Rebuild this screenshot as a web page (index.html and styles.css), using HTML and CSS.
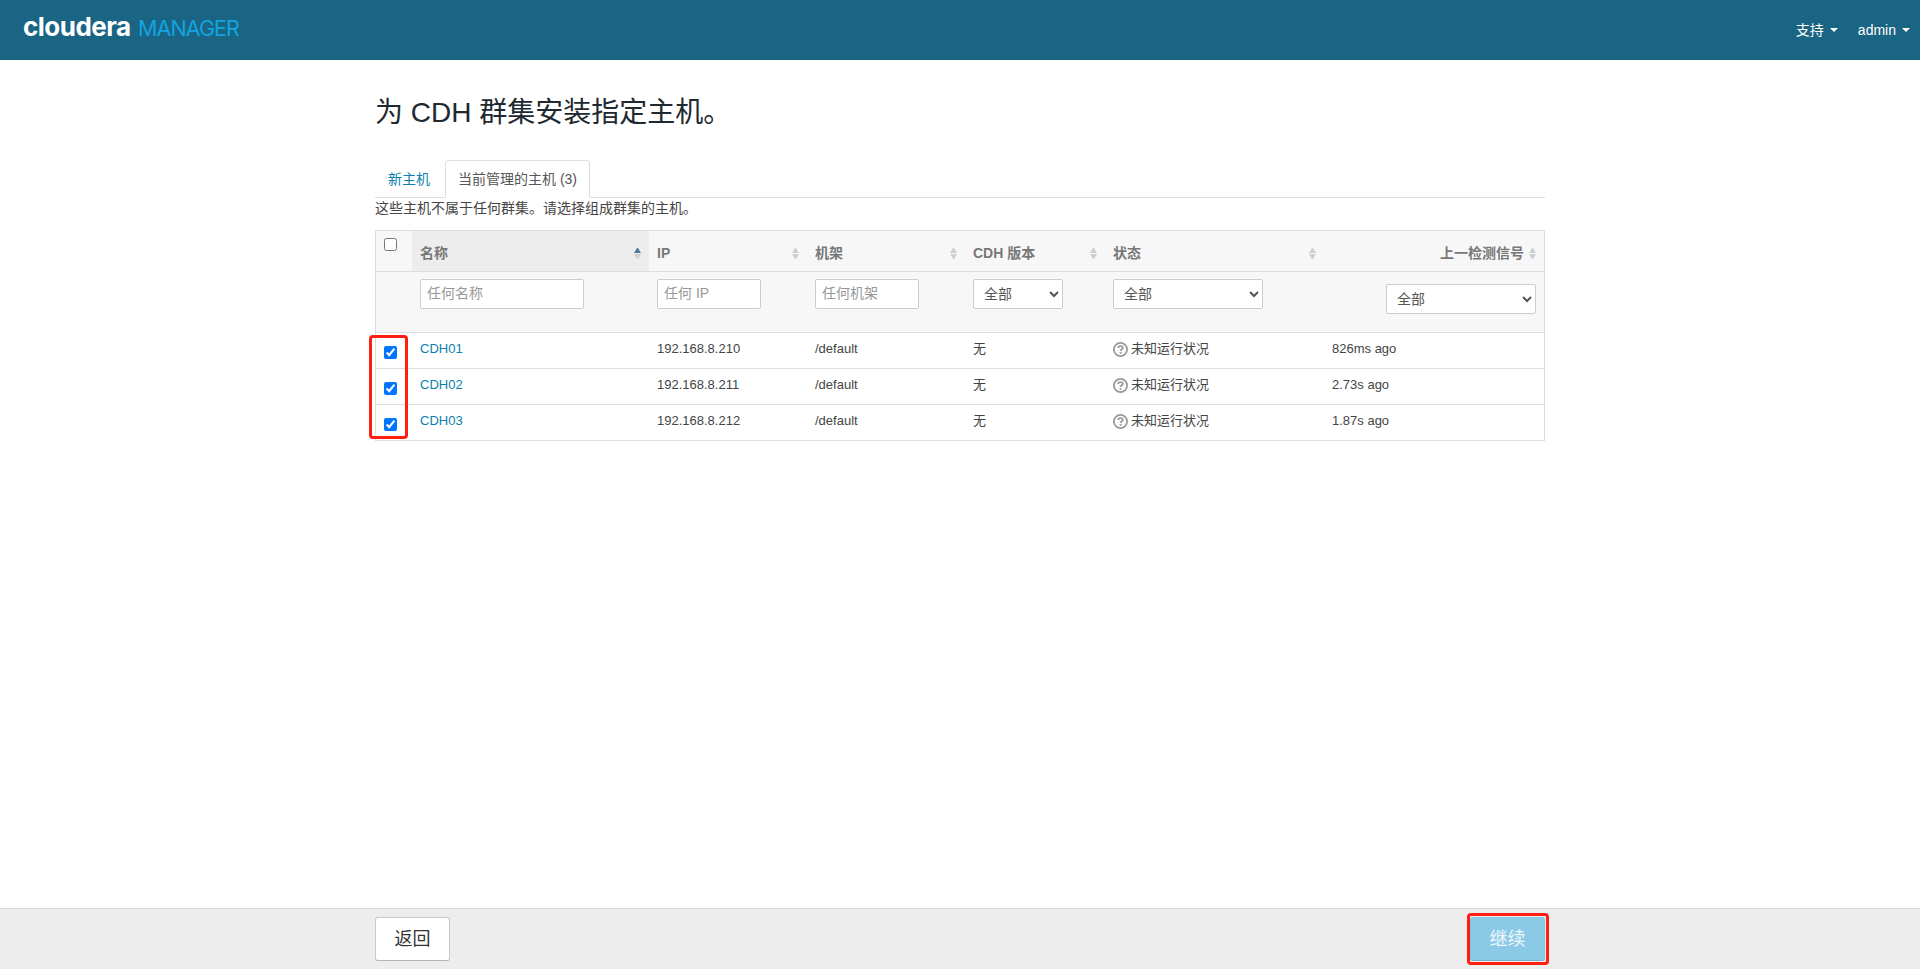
FILE: index.html
```html
<!DOCTYPE html>
<html lang="zh-CN">
<head>
  <meta charset="UTF-8" />
  <meta name="viewport" content="width=device-width, initial-scale=1.0"/>
  <title>Cloudera Manager</title>
  <link rel="stylesheet" href="styles.css">
</head>
<body>

  <!-- TOP BAR -->
  <header class="navbar">
    <div class="brand"><span class="brand-name">cloudera</span><span class="brand-product">MANAGER</span></div>
    <nav class="menu">
      <a class="menu-item">支持<span class="caret"></span></a>
      <a class="menu-item">admin<span class="caret"></span></a>
    </nav>
  </header>

  <!-- CONTENT -->
  <main class="container content">
    <h1>为 CDH 群集安装指定主机。</h1>
    <div class="tabs">
      <a class="tab">新主机</a>
      <a class="tab active">当前管理的主机 (3)</a>
    </div>
    <p class="hint">这些主机不属于任何群集。请选择组成群集的主机。</p>

    <div class="table-wrap">
      <table class="hosts">
        <colgroup>
          <col class="col-check"><col class="col-name"><col class="col-ip"><col class="col-rack"><col class="col-version"><col class="col-status"><col>
        </colgroup>
        <thead>
          <tr class="head">
            <th class="check"><input type="checkbox"></th>
            <th class="sorted"><div class="th">名称<span class="sort"></span></div></th>
            <th><div class="th">IP<span class="sort"></span></div></th>
            <th><div class="th">机架<span class="sort"></span></div></th>
            <th><div class="th">CDH 版本<span class="sort"></span></div></th>
            <th><div class="th">状态<span class="sort"></span></div></th>
            <th><div class="th right">上一检测信号<span class="sort"></span></div></th>
          </tr>
          <tr class="filters">
            <td></td>
            <td><input class="field name" type="text" placeholder="任何名称"></td>
            <td><input class="field" type="text" placeholder="任何 IP"></td>
            <td><input class="field" type="text" placeholder="任何机架"></td>
            <td><select class="field small"><option>全部</option></select></td>
            <td><select class="field wide"><option>全部</option></select></td>
            <td class="last"><select class="field wide"><option>全部</option></select></td>
          </tr>
        </thead>
        <tbody>
          <tr>
            <td class="check"><input type="checkbox" checked></td>
            <td><a>CDH01</a></td><td>192.168.8.210</td><td>/default</td><td>无</td>
            <td><div class="status"><svg class="unknown" viewBox="0 0 15 15"><circle cx="7.5" cy="7.5" r="6.6"/><path d="M5.2 6C5.2 3.4 9.8 3.4 9.8 5.9C9.8 7.4 7.5 7.2 7.5 9M7.5 10V11.7"/></svg>未知运行状况</div></td>
            <td class="ago">826ms ago</td>
          </tr>
          <tr>
            <td class="check"><input type="checkbox" checked></td>
            <td><a>CDH02</a></td><td>192.168.8.211</td><td>/default</td><td>无</td>
            <td><div class="status"><svg class="unknown" viewBox="0 0 15 15"><circle cx="7.5" cy="7.5" r="6.6"/><path d="M5.2 6C5.2 3.4 9.8 3.4 9.8 5.9C9.8 7.4 7.5 7.2 7.5 9M7.5 10V11.7"/></svg>未知运行状况</div></td>
            <td class="ago">2.73s ago</td>
          </tr>
          <tr>
            <td class="check"><input type="checkbox" checked></td>
            <td><a>CDH03</a></td><td>192.168.8.212</td><td>/default</td><td>无</td>
            <td><div class="status"><svg class="unknown" viewBox="0 0 15 15"><circle cx="7.5" cy="7.5" r="6.6"/><path d="M5.2 6C5.2 3.4 9.8 3.4 9.8 5.9C9.8 7.4 7.5 7.2 7.5 9M7.5 10V11.7"/></svg>未知运行状况</div></td>
            <td class="ago">1.87s ago</td>
          </tr>
        </tbody>
      </table>
      <div class="mark mark-rows"></div>
    </div>
  </main>

  <!-- WIZARD BUTTONS -->
  <footer class="footer">
    <div class="container actions">
      <button class="btn">返回</button>
      <div class="next">
        <button class="btn primary">继续</button>
        <div class="mark mark-next"></div>
      </div>
    </div>
  </footer>

</body>
</html>
```
FILE: styles.css
```css
* {
  box-sizing: border-box;
}
body {
  margin: 0;
  height: 100vh;
  display: flex;
  flex-direction: column;
  overflow: hidden;
  background: #fff;
  color: #444;
  font-family: "Liberation Sans", "Noto Sans CJK SC", sans-serif;
  font-size: 14px;
  line-height: 20px;
}
.container {
  width: 1170px;
  margin: 0 auto;
}
.navbar {
  height: 60px;
  flex: none;
  display: flex;
  justify-content: space-between;
  padding: 0 10px 0 23px;
  background: #1a6484;
}
.brand {
  display: flex;
  align-items: baseline;
  padding-top: 12px;
  line-height: 30px;
  font-family: Inter, sans-serif;
}
.brand-name {
  width: 115px;
  color: #fff;
  font-size: 26px;
  font-weight: 700;
  letter-spacing: -0.5px;
}
.brand-product {
  color: #12a5e0;
  font-size: 21.5px;
  letter-spacing: -0.9px;
}
.menu {
  display: flex;
  gap: 20px;
  padding-top: 20px;
}
.menu-item {
  display: flex;
  color: #fff;
}
.caret {
  width: 8px;
  height: 4px;
  margin: 8px 0 0 6px;
  border: 4px solid transparent;
  border-top-color: #fff;
  border-bottom: 0;
}
.content {
  flex: 1;
}
h1 {
  margin: 33px 0 27px;
  color: #20292f;
  font-size: 28px;
  font-weight: 400;
  line-height: 40px;
}
.tabs {
  display: flex;
  height: 38px;
  border-bottom: 1px solid #ddd;
}
.tab {
  height: 38px;
  margin-right: 2px;
  padding: 8px 12px;
  border: 1px solid transparent;
  border-radius: 4px 4px 0 0;
  color: #0b7fad;
}
.tab.active {
  background: #fff;
  border-color: #ddd;
  border-bottom-color: #fff;
  color: #555;
}
.hint {
  margin: 0 0 12px;
}
.table-wrap {
  position: relative;
}
.hosts {
  width: 100%;
  table-layout: fixed;
  border: 1px solid #ddd;
  border-spacing: 0;
  font-size: 13px;
}
.col-check { width: 36px; }
.col-name { width: 237px; }
.col-ip { width: 158px; }
.col-rack { width: 158px; }
.col-version { width: 140px; }
.col-status { width: 219px; }
.hosts th {
  height: 40px;
  padding: 0 8px;
  background: #f7f7f7;
  color: #777;
  font-size: 14px;
  text-align: left;
}
.hosts th.sorted {
  background: #ededed;
}
.hosts td {
  height: 36px;
  padding: 6px 8px 9px;
  border-top: 1px solid #ddd;
  vertical-align: top;
}
.th {
  display: flex;
  justify-content: space-between;
  align-items: center;
  padding-top: 3px;
}
.th.right {
  justify-content: flex-end;
  gap: 5px;
}
.sort {
  width: 7px;
  height: 11px;
  margin-top: 2px;
}
.sort::before,
.sort::after {
  content: "";
  display: block;
  border: 3.5px solid transparent;
}
.sort::before {
  border-top: 0;
  border-bottom: 5px solid #ccd0d2;
}
.sort::after {
  margin-top: 1px;
  border-bottom: 0;
  border-top: 5px solid #ccd0d2;
}
.sorted .sort::before {
  border-bottom-color: #527a96;
}
.hosts .check {
  vertical-align: top;
}
.hosts .check input {
  display: block;
  width: 13px;
  height: 13px;
  margin: 7px 0 0;
}
.hosts .filters td {
  height: 61px;
  padding: 7px 8px 0;
  background: #f7f7f7;
}
.hosts .filters .last {
  padding-top: 12px;
  text-align: right;
}
.field {
  display: block;
  width: 104px;
  height: 30px;
  padding: 0 6px 2px;
  border: 1px solid #ccc;
  border-radius: 2px;
  background: #fff;
  color: #555;
  font: inherit;
  font-size: 14px;
}
.field.name { width: 164px; }
select.field { padding: 0 6px 1px; }
.field.small { width: 90px; }
.field.wide { width: 150px; }
.last .field { margin-left: auto; }
.field::placeholder {
  color: #999;
}
.hosts a {
  color: #0b7fad;
}
.status {
  display: flex;
  align-items: center;
  gap: 3px;
}
.unknown {
  width: 15px;
  height: 15px;
  fill: none;
  stroke: #999;
  stroke-width: 1.8;
}
.footer {
  flex: none;
  height: 61px;
  border-top: 1px solid #ddd;
  background: #ededed;
}
.actions {
  display: flex;
  justify-content: space-between;
  padding-top: 8px;
}
.btn {
  display: block;
  width: 75px;
  height: 44px;
  padding: 0;
  border: 1px solid #c8c8c8;
  border-bottom-color: #b5b5b5;
  border-radius: 3px;
  background: #fff;
  color: #333;
  font: inherit;
  font-size: 18px;
}
.btn.primary {
  border-color: #85c2dd;
  border-bottom-color: #76afc7;
  background: #8acae7;
  color: #eef7fb;
}
.next {
  position: relative;
}
/* red highlight boxes */
.mark {
  position: absolute;
  border: 3px solid #ff1f10;
  border-radius: 4px;
  pointer-events: none;
}
.mark-rows {
  left: -6px;
  top: 105px;
  width: 39px;
  height: 104px;
}
.mark-next {
  left: -3px;
  top: -4px;
  width: 82px;
  height: 52px;
}
```
